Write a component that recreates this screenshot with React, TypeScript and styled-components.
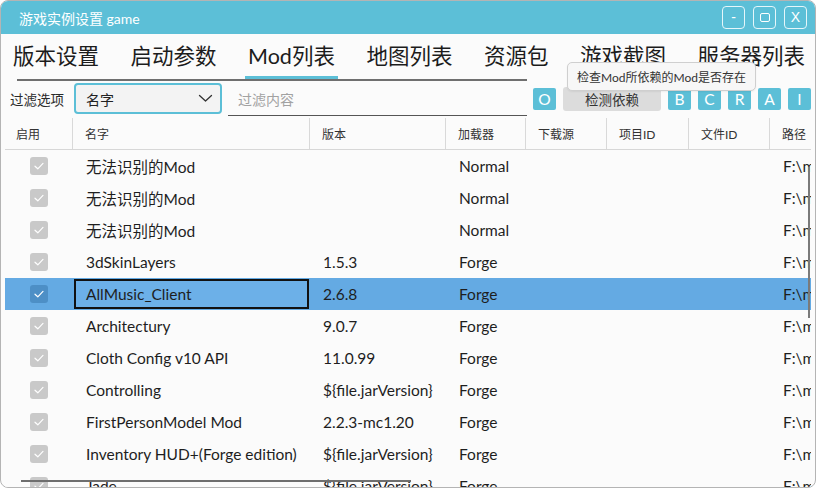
import React from "react";
import styled, { createGlobalStyle } from "styled-components";

const Global = createGlobalStyle`
  html, body { margin: 0; padding: 0; background: #ffffff; }
  body { font-family: "Lato", "Noto Sans CJK SC", sans-serif; color: #1e1e1e; }
  * { box-sizing: border-box; }
`;

const Window = styled.div`
  position: relative;
  width: 816px;
  height: 488px;
  border: 1px solid #b4b4b4;
  border-radius: 8px;
  overflow: hidden;
  background: #fbfbfb;
  display: flex;
  flex-direction: column;
`;

const TitleBar = styled.div`
  height: 33px;
  flex: none;
  background: #5cbfd7;
  display: flex;
  align-items: center;
  padding: 0 8px 0 18px;
`;

const Title = styled.div`
  flex: 1;
  color: #ffffff;
  font-size: 14px;
`;

const TitleButtons = styled.div`
  display: flex;
  gap: 8px;
  margin-top: -1px;
`;

const TitleButton = styled.div`
  width: 23px;
  height: 23px;
  border: 1.5px solid #e6f6fa;
  border-radius: 4px;
  color: #ffffff;
  font-size: 14px;
  display: flex;
  align-items: center;
  justify-content: center;
  font-family: "Liberation Sans", sans-serif;
`;

const SquareGlyph = styled.span`
  width: 10px;
  height: 9px;
  border: 1.5px solid #ffffff;
  border-radius: 2px;
`;

const TabBar = styled.div`
  height: 45px;
  flex: none;
  display: flex;
  gap: 25.5px;
  padding-left: 9px;
  overflow: hidden;
  white-space: nowrap;
`;

const Tab = styled.div<{ $active?: boolean }>`
  padding: 0 3px;
  display: flex;
  align-items: center;
  font-size: 21.5px;
  color: #1c1c1c;
  border-bottom: 3px solid ${(p) => (p.$active ? "#5cbfd7" : "transparent")};
  padding-bottom: 2px;
`;

const TabScroll = styled.div`
  height: 2px;
  width: 510px;
  margin-left: 16px;
  background: #6f6f6f;
  flex: none;
`;

const FilterRow = styled.div`
  height: 35px;
  flex: none;
  display: flex;
  align-items: center;
  padding-left: 9px;
`;

const FilterLabel = styled.div`
  font-size: 13.5px;
  width: 64px;
  color: #2a2a2a;
`;

const Combo = styled.div`
  width: 148px;
  height: 31px;
  border: 2px solid #5cbfd7;
  border-radius: 4px;
  background: #f3f3f3;
  display: flex;
  align-items: center;
  justify-content: space-between;
  padding: 0 7px 0 10px;
  font-size: 14px;
  color: #222;
`;

const FilterInput = styled.div`
  width: 299px;
  height: 32px;
  margin-left: 6px;
  margin-top: 2px;
  border-bottom: 1.5px solid #555555;
  display: flex;
  align-items: center;
  padding-left: 10px;
  font-size: 14px;
  color: #a2a2a2;
`;

const Actions = styled.div`
  display: flex;
  gap: 7px;
  margin-left: 6px;
  align-items: center;
`;

const LetterButton = styled.div`
  width: 23px;
  height: 22px;
  background: #5cbfd7;
  border-radius: 2px;
  color: #ffffff;
  font-size: 15.5px;
  display: flex;
  align-items: center;
  justify-content: center;
`;

const TextButton = styled.div`
  width: 98px;
  height: 24px;
  background: #dcdcdc;
  border-radius: 3px;
  font-size: 13.5px;
  color: #333;
  display: flex;
  align-items: center;
  justify-content: center;
`;

const Tooltip = styled.div`
  position: absolute;
  left: 566px;
  top: 61px;
  height: 29px;
  padding: 0 9px;
  display: flex;
  align-items: center;
  background: #f7f7f7;
  border: 1px solid #cfcfcf;
  border-radius: 5px;
  font-size: 12px;
  color: #333;
  white-space: nowrap;
  box-shadow: 0 1px 2px rgba(0, 0, 0, 0.06);
`;

const TableWrap = styled.div`
  position: relative;
  flex: 1;
  margin: 2px 4px 0 4px;
  overflow: hidden;
`;

const COLS = "68px 237px 136px 80px 81px 82px 81px 240px";

const HeaderRow = styled.div`
  display: grid;
  grid-template-columns: ${COLS};
  height: 32px;
  border-bottom: 1px solid #d7d7d7;
  background: #fbfbfb;
`;

const HeaderCell = styled.div`
  display: flex;
  align-items: center;
  padding-left: 12px;
  font-size: 12px;
  color: #333;
  border-right: 1px solid #d9d9d9;
  white-space: nowrap;
  &:first-child { padding-left: 11px; }
  &:last-child { border-right: none; }
`;

const Row = styled.div<{ $selected?: boolean }>`
  display: grid;
  grid-template-columns: ${COLS};
  height: 32px;
  background: ${(p) => (p.$selected ? "#64aae3" : "#fbfbfb")};
`;

const Cell = styled.div<{ $focus?: boolean }>`
  display: flex;
  align-items: center;
  padding-left: 13px;
  font-size: 15.5px;
  color: #1e1e1e;
  white-space: nowrap;
  overflow: hidden;
  ${(p) =>
    p.$focus
      ? `background: #6cb0e8; box-shadow: inset 0 0 0 1px #64aae3, inset 0 0 0 3px #111;`
      : ""}
`;

const CheckCell = styled.div`
  display: flex;
  align-items: center;
  justify-content: center;
`;

const CheckBox = styled.div<{ $selected?: boolean }>`
  width: 18px;
  height: 18px;
  border-radius: 3px;
  background: ${(p) => (p.$selected ? "#4d8fc6" : "#c9c9c9")};
  display: flex;
  align-items: center;
  justify-content: center;
`;

const VScroll = styled.div`
  position: absolute;
  left: 803px;
  top: 49px;
  width: 2px;
  height: 151px;
  background: #7a7a7a;
`;

const HScroll = styled.div`
  position: absolute;
  left: 16px;
  top: 362px;
  width: 390px;
  height: 2px;
  background: #6e6e6e;
`;

type Mod = { name: string; version: string; loader: string; path: string };

const mods: Mod[] = [
  { name: "无法识别的Mod", version: "", loader: "Normal", path: "F:\\minecraft\\mods" },
  { name: "无法识别的Mod", version: "", loader: "Normal", path: "F:\\minecraft\\mods" },
  { name: "无法识别的Mod", version: "", loader: "Normal", path: "F:\\minecraft\\mods" },
  { name: "3dSkinLayers", version: "1.5.3", loader: "Forge", path: "F:\\minecraft\\mods" },
  { name: "AllMusic_Client", version: "2.6.8", loader: "Forge", path: "F:\\minecraft\\mods" },
  { name: "Architectury", version: "9.0.7", loader: "Forge", path: "F:\\minecraft\\mods" },
  { name: "Cloth Config v10 API", version: "11.0.99", loader: "Forge", path: "F:\\minecraft\\mods" },
  { name: "Controlling", version: "${file.jarVersion}", loader: "Forge", path: "F:\\minecraft\\mods" },
  { name: "FirstPersonModel Mod", version: "2.2.3-mc1.20", loader: "Forge", path: "F:\\minecraft\\mods" },
  { name: "Inventory HUD+(Forge edition)", version: "${file.jarVersion}", loader: "Forge", path: "F:\\minecraft\\mods" },
  { name: "Jade", version: "${file.jarVersion}", loader: "Forge", path: "F:\\minecraft\\mods" },
];

const Check = () => (
  <svg width="12" height="10" viewBox="0 0 12 10">
    <polyline points="2,5.2 4.8,7.8 10,2.4" fill="none" stroke="#ffffff" strokeWidth="1.2" strokeLinecap="round" strokeLinejoin="round" />
  </svg>
);

const Chevron = () => (
  <svg width="15" height="9" viewBox="0 0 15 9">
    <polyline points="1.5,1.5 7.5,7 13.5,1.5" fill="none" stroke="#333" strokeWidth="1.3" strokeLinecap="round" strokeLinejoin="round" />
  </svg>
);

const tabs = ["版本设置", "启动参数", "Mod列表", "地图列表", "资源包", "游戏截图", "服务器列表"];
const headers = ["启用", "名字", "版本", "加载器", "下载源", "项目ID", "文件ID", "路径"];

export default function App() {
  return (
    <>
      <Global />
      <Window>
        <TitleBar>
          <Title>游戏实例设置 game</Title>
          <TitleButtons>
            <TitleButton>-</TitleButton>
            <TitleButton>
              <SquareGlyph />
            </TitleButton>
            <TitleButton>X</TitleButton>
          </TitleButtons>
        </TitleBar>
        <TabBar>
          {tabs.map((t) => (
            <Tab key={t} $active={t === "Mod列表"}>
              {t}
            </Tab>
          ))}
        </TabBar>
        <TabScroll />
        <FilterRow>
          <FilterLabel>过滤选项</FilterLabel>
          <Combo>
            <span>名字</span>
            <Chevron />
          </Combo>
          <FilterInput>过滤内容</FilterInput>
          <Actions>
            <LetterButton>O</LetterButton>
            <TextButton>检测依赖</TextButton>
            {["B", "C", "R", "A", "I"].map((l) => (
              <LetterButton key={l}>{l}</LetterButton>
            ))}
          </Actions>
        </FilterRow>
        <TableWrap>
          <HeaderRow>
            {headers.map((h) => (
              <HeaderCell key={h}>{h}</HeaderCell>
            ))}
          </HeaderRow>
          {mods.map((m, i) => {
            const sel = i === 4;
            return (
              <Row key={i} $selected={sel}>
                <CheckCell>
                  <CheckBox $selected={sel}>
                    <Check />
                  </CheckBox>
                </CheckCell>
                <Cell $focus={sel}>{m.name}</Cell>
                <Cell>{m.version}</Cell>
                <Cell>{m.loader}</Cell>
                <Cell />
                <Cell />
                <Cell />
                <Cell>{m.path}</Cell>
              </Row>
            );
          })}
          <VScroll />
          <HScroll />
        </TableWrap>
        <Tooltip>检查Mod所依赖的Mod是否存在</Tooltip>
      </Window>
    </>
  );
}
